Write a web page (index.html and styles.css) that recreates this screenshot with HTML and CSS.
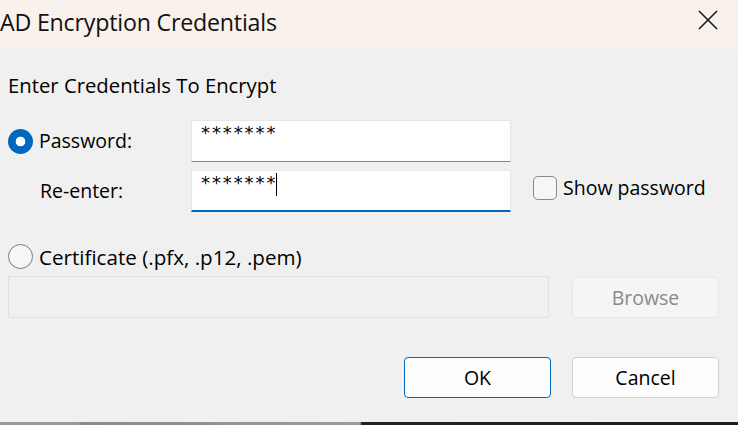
FILE: index.html
```html
<!DOCTYPE html>
<html>
<head>
<meta charset="utf-8">
<link rel="stylesheet" href="styles.css">
</head>
<body>
<div class="window">
  <div class="titlebar">
    <span class="title">AD Encryption Credentials</span>
    <svg class="close" width="20" height="20" viewBox="0 0 20 20"><path d="M1 1 L19 19 M19 1 L1 19" stroke="#1a1a1a" stroke-width="1.6" fill="none"/></svg>
  </div>
  <div class="content">
    <div class="heading">Enter Credentials To Encrypt</div>
    <div class="row row-pw">
      <div class="label-cell">
        <span class="radio checked"></span>
        <span class="label">Password:</span>
      </div>
      <div class="textbox"><span class="stars">*******</span></div>
    </div>
    <div class="row row-re">
      <div class="label-cell indent">
        <span class="label">Re-enter:</span>
      </div>
      <div class="textbox focused"><span class="stars">*******</span><span class="caret"></span></div>
      <div class="check-cell">
        <span class="checkbox"></span>
        <span class="label">Show password</span>
      </div>
    </div>
    <div class="row row-cert">
      <span class="radio"></span>
      <span class="label cert-label">Certificate (.pfx, .p12, .pem)</span>
    </div>
    <div class="row row-file">
      <div class="filebox"></div>
      <button class="btn disabled">Browse</button>
    </div>
    <div class="row row-actions">
      <button class="btn default">OK</button>
      <button class="btn">Cancel</button>
    </div>
  </div>
</div>
<div class="desktop-edge"></div>
</body>
</html>
```
FILE: styles.css
```css
* { box-sizing: border-box; }
html, body { margin: 0; padding: 0; }
body {
  width: 738px;
  height: 425px;
  overflow: hidden;
  background: #f0f0f0;
  font-family: "Open Sans", "Noto Sans", sans-serif;
  color: #000;
}
.window {
  height: 422px;
  background: #f0f0f0;
  display: flex;
  flex-direction: column;
}
.titlebar {
  height: 49px;
  background: #f9f1eb;
  display: flex;
  align-items: center;
  justify-content: space-between;
  padding: 0 20px 0 0;
}
.title {
  font-size: 23.2px;
  color: #111;
  letter-spacing: -0.2px;
  margin-top: -5px;
}
.close { margin-top: -9px; }
.content {
  padding: 0 19px 0 8px;
  display: flex;
  flex-direction: column;
}
.heading {
  font-size: 20.3px;
  margin-top: 24px;
  height: 24px;
  line-height: 24px;
}
.row { display: flex; align-items: center; }
.label { font-size: 19.5px; line-height: 24px; }
.cert-label { font-size: 20.6px; }
.label-cell {
  width: 183px;
  display: flex;
  align-items: center;
  gap: 6px;
}
.label-cell.indent { padding-left: 32px; }
.radio {
  width: 25px;
  height: 25px;
  border-radius: 50%;
  border: 1.5px solid #7a7a7a;
  background: #f6f6f6;
  flex: none;
  display: inline-block;
}
.radio.checked {
  border: none;
  background: radial-gradient(circle, #fff 0 4.5px, #0067c0 5.2px);
}
.textbox {
  width: 320px;
  height: 42px;
  background: #fff;
  border: 1px solid #e6e6e6;
  border-bottom: 1px solid #868686;
  padding: 1px 0 0 9px;
  display: flex;
  align-items: flex-start;
}
.textbox.focused { border-bottom: 2px solid #0067c0; }
.stars {
  font-family: "DejaVu Sans", sans-serif;
  font-size: 18px;
  letter-spacing: 1.9px;
  line-height: 22px;
}
.caret {
  width: 1px;
  height: 23px;
  background: #000;
  margin-top: 1px;
  margin-left: -1px;
}
.row-pw { margin-top: 23px; }
.row-re { margin-top: 8px; }
.check-cell {
  margin-left: 22px;
  margin-top: -6px;
  display: flex;
  align-items: center;
  gap: 6px;
}
.checkbox {
  width: 24px;
  height: 24px;
  border: 1px solid #8a8a8a;
  border-radius: 5px;
  background: #f6f6f6;
  display: inline-block;
}
.row-cert { margin-top: 32px; gap: 6px; }
.row-file { margin-top: 7px; justify-content: space-between; }
.filebox {
  width: 541px;
  height: 42px;
  border: 1px solid #e0e0e0;
  background: #f0f0f0;
}
.btn {
  width: 147px;
  height: 41px;
  border: 1px solid #d0d0d0;
  border-radius: 4px;
  background: #fdfdfd;
  font-family: inherit;
  font-size: 19.5px;
  color: #000;
  padding: 0;
}
.btn.disabled {
  background: #f5f5f5;
  border-color: #e8e8e8;
  color: #8a8a8a;
}
.btn.default { border-color: #0067c0; }
.row-actions {
  margin-top: 39px;
  justify-content: flex-end;
  gap: 21px;
}
.desktop-edge {
  height: 3px;
  background: linear-gradient(to right, #9a9a9a 0 79px, #8a8a8a 80px, #9c9c9c 360px, #222 362px, #1e1e1e 100%);
}
```
